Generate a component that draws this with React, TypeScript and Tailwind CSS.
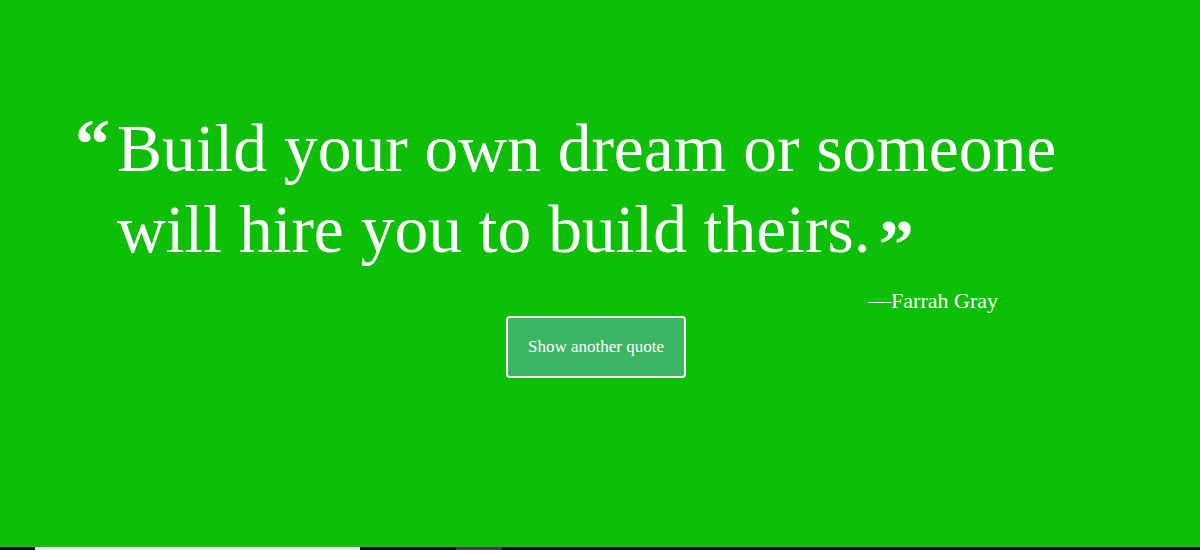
export default function App() {
  return (
    <div className="h-[550px] w-full bg-[#0dbf07] flex flex-col font-['Liberation_Serif',serif] text-white">
      <main className="flex-1 pl-[75px] pt-[109px]">
        <blockquote className="flex items-start">
          <span className="w-[42px] text-[70px] leading-[70px] font-bold">“</span>
          <p className="text-[67.5px] leading-[80px]">
            Build your own dream or someone
            <br />
            will hire you to build theirs.
            <span className="ml-[8px] text-[70px] font-bold relative top-[16px]">”</span>
          </p>
        </blockquote>
        <div className="w-[923px] mt-[17px] text-right text-[22px] leading-[28px]">—Farrah Gray</div>
        <button className="ml-[431px] mt-[1px] w-[180px] h-[62px] rounded-[4px] border-2 border-white bg-[#3bb562] text-[17px] text-white">
          Show another quote
        </button>
      </main>
      <div className="h-[3px] flex bg-[#0b0c1c]">
        <div className="ml-[35px] w-[325px] bg-[#e6e8ef]" />
        <div className="ml-[96px] w-[46px] bg-[#3a3d48]" />
      </div>
    </div>
  );
}
